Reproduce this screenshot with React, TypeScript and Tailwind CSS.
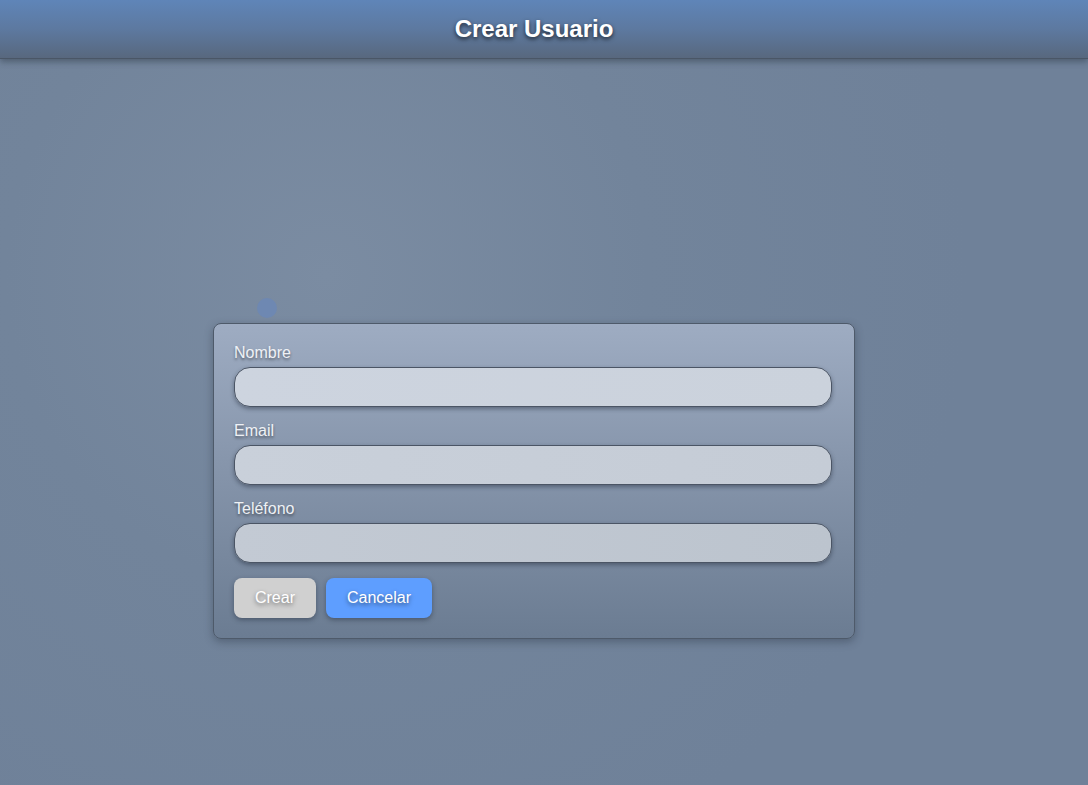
import React from "react";

export default function App() {
  return (
    <div
      className="min-h-[785px] w-full flex flex-col bg-[radial-gradient(circle_at_30%_35%,#7b8ca2_0%,#72849b_35%,#6f8199_70%)]"
      style={{ fontFamily: '"Liberation Sans", Arial, sans-serif' }}
    >
      <header className="h-[59px] flex items-center justify-center pr-[20px] bg-[linear-gradient(to_bottom,#5f85b8_0%,#5d79a0_50%,#58687e_100%)] border-b border-[#4a5666] shadow-[0_3px_6px_rgba(40,50,65,0.45)]">
        <h1 className="text-[24px] font-bold text-white [text-shadow:0_2px_4px_rgba(0,0,0,0.7)] -mt-[1px]">
          Crear Usuario
        </h1>
      </header>

      <div className="relative ml-[213px] mt-[264px] w-[642px]">
        <div className="absolute left-[44px] -top-[25px] w-[20px] h-[20px] rounded-full bg-[#6d87b4] opacity-90" />
        <form className="flex flex-col gap-[15px] rounded-[8px] border border-[#4e5a6a] px-5 pt-5 pb-5 bg-[linear-gradient(to_bottom,#9eacc2_0%,#8695ab_45%,#6b7c92_100%)] shadow-[0_3px_8px_rgba(40,50,65,0.4)]">
          {["Nombre", "Email", "Teléfono"].map((l, i) => (
            <div key={l} className="flex flex-col gap-[6px]">
              <label className="text-[16px] leading-[17px] text-[#eef1f5] [text-shadow:0_2px_3px_rgba(0,0,0,0.45)]">
                {l}
              </label>
              <input
                className={`h-[40px] w-[598px] rounded-[16px] border border-[#4b5565] shadow-[0_2px_4px_rgba(30,40,55,0.45)] outline-none ${
                  i === 0
                    ? "bg-[linear-gradient(to_right,#cdd4df,#cbd2dc)]"
                    : i === 1
                    ? "bg-[linear-gradient(to_right,#c9d0da,#c5ccd6)]"
                    : "bg-[linear-gradient(to_right,#c3cad4,#bcc4ce)]"
                }`}
              />
            </div>
          ))}
          <div className="flex gap-[10px]">
            <button
              type="button"
              className="h-[40px] w-[82px] rounded-[8px] bg-[#d0d0d0] text-white text-[16px] [text-shadow:0_2px_4px_rgba(0,0,0,0.5)] shadow-[0_2px_5px_rgba(30,40,55,0.45)]"
            >
              Crear
            </button>
            <button
              type="button"
              className="h-[40px] w-[106px] rounded-[8px] bg-[#5e9eff] text-white text-[16px] [text-shadow:0_2px_4px_rgba(0,0,0,0.5)] shadow-[0_2px_5px_rgba(30,40,55,0.45)]"
            >
              Cancelar
            </button>
          </div>
        </form>
      </div>
    </div>
  );
}
